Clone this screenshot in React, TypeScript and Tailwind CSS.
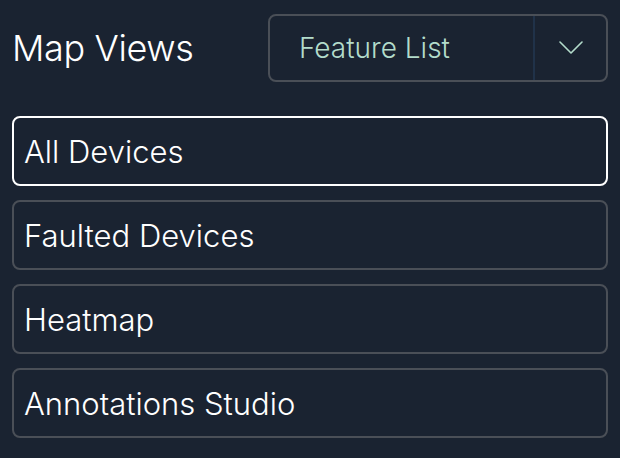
const VIEWS = ['All Devices', 'Faulted Devices', 'Heatmap', 'Annotations Studio'];

export default function App() {
  const selected = 'All Devices';

  return (
    <div
      className="min-h-screen w-[620px] h-[458px] bg-[#1a2331] px-3 pt-[14px] text-white"
      style={{ fontFamily: 'Inter, "Noto Sans", sans-serif' }}
    >
      <div className="flex items-center justify-between">
        <h1 className="text-[36px] font-light leading-none tracking-[-0.01em]">Map Views</h1>
        <div className="flex h-[68px] w-[340px] rounded-lg border-2 border-[#4a4f57]">
          <div className="flex flex-1 items-center pl-[29px] text-[28px] font-light text-[#b3dccb]">
            Feature List
          </div>
          <div className="flex w-[73px] items-center justify-center border-l-2 border-[#203249]">
            <svg width="24" height="14" viewBox="0 0 24 14" fill="none">
              <polyline
                points="1,1 12,12 23,1"
                stroke="#b3dccb"
                strokeWidth="1.6"
                strokeLinecap="round"
                strokeLinejoin="round"
              />
            </svg>
          </div>
        </div>
      </div>

      <div className="mt-[34px] flex flex-col gap-[14px]">
        {VIEWS.map((v) => (
          <button
            key={v}
            className={`flex h-[70px] items-center rounded-lg border-2 pl-[10px] pr-3 pt-[2px] text-left text-[31px] font-light ${
              v === selected ? 'border-white' : 'border-[#4a4f57]'
            }`}
          >
            {v}
          </button>
        ))}
      </div>
    </div>
  );
}
